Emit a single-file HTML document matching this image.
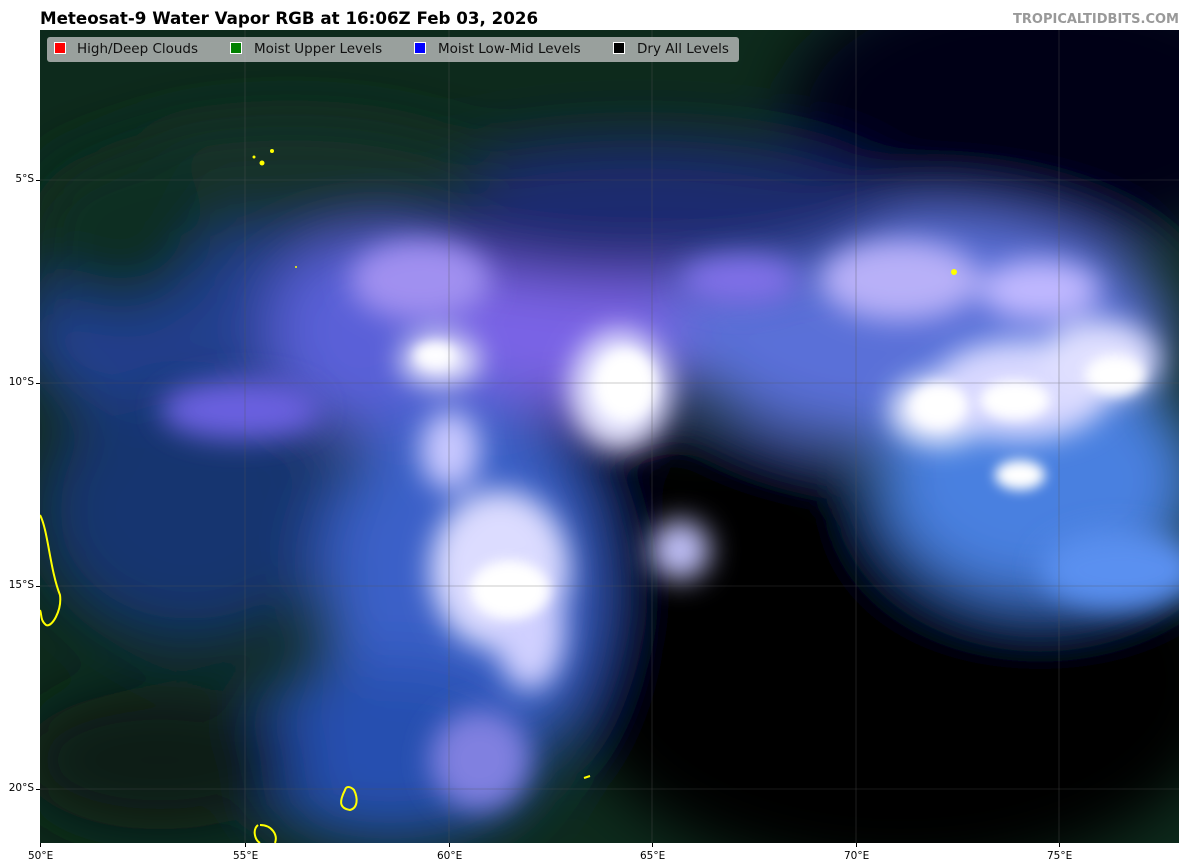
<!DOCTYPE html>
<html><head><meta charset="utf-8"><style>
body{margin:0;width:1200px;height:867px;background:#fff;position:relative;overflow:hidden;font-family:"DejaVu Sans","Liberation Sans",sans-serif}
.title{position:absolute;left:40px;top:8px;font-weight:bold;font-size:16.7px;color:#000}
.brand{position:absolute;right:21px;top:12px;font-weight:bold;font-size:13px;color:#999}
#map{position:absolute;left:40px;top:30px;width:1139px;height:813px;overflow:hidden;background:#0c2418}
.leg{position:absolute;left:47px;top:37px;width:692px;height:25px;background:rgba(200,200,200,0.75);border-radius:3px;font-size:13.5px;color:#111}
.leg span{position:absolute;top:4px}
.leg i{position:absolute;top:5px;width:12px;height:12px;border:1px solid #fff;box-sizing:border-box}
.yl{position:absolute;font-size:10.5px;color:#000;right:1166px}
.xl{position:absolute;font-size:10.5px;color:#000;top:850px}
.tk{position:absolute;background:#000}
</style></head><body>
<div class="title">Meteosat-9 Water Vapor RGB at 16:06Z Feb 03, 2026</div>
<div class="brand">TROPICALTIDBITS.COM</div>
<div id="map">
<svg width="1139" height="813" viewBox="0 0 1139 813">
<defs>
<filter id="b1"><feGaussianBlur stdDeviation="30"/></filter>
<filter id="b2"><feGaussianBlur stdDeviation="14"/></filter>
<filter id="b3"><feGaussianBlur stdDeviation="6"/></filter>
</defs>
<rect width="1139" height="813" fill="#0d2a1c"/>
<g filter="url(#b1)">
<ellipse cx="1000" cy="80" rx="250" ry="140" fill="#020018"/>
<ellipse cx="860" cy="650" rx="330" ry="200" fill="#000"/>
<ellipse cx="680" cy="520" rx="160" ry="120" fill="#000"/>
<ellipse cx="560" cy="430" rx="70" ry="60" fill="#050010"/>
<ellipse cx="200" cy="300" rx="220" ry="110" fill="#24408f"/>
<ellipse cx="150" cy="480" rx="150" ry="130" fill="#193470"/>
<ellipse cx="380" cy="300" rx="150" ry="120" fill="#5a60d8"/>
<ellipse cx="540" cy="280" rx="140" ry="100" fill="#7a64e6"/>
<ellipse cx="880" cy="300" rx="250" ry="120" fill="#5a70d8"/>
<ellipse cx="1000" cy="450" rx="160" ry="120" fill="#4a80e0"/>
<ellipse cx="420" cy="560" rx="140" ry="200" fill="#3a60c8"/>
<ellipse cx="350" cy="720" rx="150" ry="90" fill="#2850b0"/>
<ellipse cx="120" cy="730" rx="140" ry="70" fill="#081a14"/>
<ellipse cx="600" cy="180" rx="250" ry="70" fill="#1a2a70"/>
<ellipse cx="250" cy="150" rx="200" ry="60" fill="#13302a"/>
<ellipse cx="80" cy="200" rx="90" ry="80" fill="#0f2e22"/>
</g>
<g filter="url(#b2)">
<ellipse cx="380" cy="250" rx="70" ry="40" fill="#a090f0"/>
<ellipse cx="580" cy="360" rx="50" ry="60" fill="#e8e8ff"/>
<ellipse cx="460" cy="540" rx="70" ry="80" fill="#dcdcff"/>
<ellipse cx="490" cy="600" rx="35" ry="60" fill="#d0d0ff"/>
<ellipse cx="400" cy="330" rx="40" ry="25" fill="#f0f0ff"/>
<ellipse cx="410" cy="420" rx="30" ry="40" fill="#c8c8ff"/>
<ellipse cx="900" cy="380" rx="50" ry="35" fill="#f4f4ff"/>
<ellipse cx="980" cy="360" rx="90" ry="50" fill="#d8d8ff"/>
<ellipse cx="1060" cy="330" rx="60" ry="40" fill="#e0e0ff"/>
<ellipse cx="860" cy="250" rx="80" ry="40" fill="#b8b0f8"/>
<ellipse cx="1000" cy="260" rx="60" ry="30" fill="#c0b8ff"/>
<ellipse cx="1080" cy="540" rx="80" ry="40" fill="#5a90f0"/>
<ellipse cx="640" cy="520" rx="30" ry="30" fill="#c0c0f8"/>
<ellipse cx="440" cy="730" rx="50" ry="50" fill="#8080e0"/>
<ellipse cx="200" cy="380" rx="80" ry="30" fill="#6a60e0"/>
<ellipse cx="700" cy="250" rx="60" ry="25" fill="#8070e8"/>
</g>
<g filter="url(#b3)" fill="#fff">
<ellipse cx="585" cy="355" rx="30" ry="35"/>
<ellipse cx="395" cy="325" rx="20" ry="12"/>
<ellipse cx="900" cy="375" rx="28" ry="22"/>
<ellipse cx="975" cy="370" rx="35" ry="20"/>
<ellipse cx="1075" cy="345" rx="30" ry="20"/>
<ellipse cx="470" cy="560" rx="40" ry="30"/>
<ellipse cx="980" cy="445" rx="25" ry="15"/>
</g>
<g stroke="#555" stroke-width="0.6" opacity="0.6">
<line x1="0" y1="150" x2="1139" y2="150"/><line x1="0" y1="353" x2="1139" y2="353"/>
<line x1="0" y1="556" x2="1139" y2="556"/><line x1="0" y1="759" x2="1139" y2="759"/>
<line x1="205" y1="0" x2="205" y2="813"/><line x1="409" y1="0" x2="409" y2="813"/>
<line x1="612" y1="0" x2="612" y2="813"/><line x1="816" y1="0" x2="816" y2="813"/>
<line x1="1019" y1="0" x2="1019" y2="813"/>
</g>
<g stroke="#ff0" stroke-width="2" fill="none">
<path d="M0 485 C8 500 10 540 20 565 C22 580 12 598 6 595 C0 590 2 585 0 580"/>
<path d="M305 760 C300 770 298 778 310 780 C318 778 318 768 314 760 C310 756 306 756 305 760Z"/>
<path d="M218 795 C212 800 215 810 220 813 M235 813 C238 805 232 795 220 795"/>
<path d="M544 748 L550 746"/>
</g>
<g fill="#ff0"><circle cx="222" cy="133" r="2.5"/><circle cx="232" cy="121" r="2"/><circle cx="214" cy="127" r="1.5"/><circle cx="914" cy="242" r="3"/><circle cx="256" cy="237" r="1"/></g>
</svg>
</div>
<div class="leg">
<i style="left:7px;background:#f00"></i><span style="left:30px">High/Deep Clouds</span>
<i style="left:183px;background:#008000"></i><span style="left:207px">Moist Upper Levels</span>
<i style="left:367px;background:#00f"></i><span style="left:391px">Moist Low-Mid Levels</span>
<i style="left:566px;background:#000"></i><span style="left:590px">Dry All Levels</span>
</div>
<div class="yl" style="top:173px">5°S</div><div class="tk" style="left:36px;top:180px;width:4px;height:1px"></div>
<div class="yl" style="top:376px">10°S</div><div class="tk" style="left:36px;top:383px;width:4px;height:1px"></div>
<div class="yl" style="top:579px">15°S</div><div class="tk" style="left:36px;top:586px;width:4px;height:1px"></div>
<div class="yl" style="top:782px">20°S</div><div class="tk" style="left:36px;top:789px;width:4px;height:1px"></div>
<div class="xl" style="left:28px">50°E</div><div class="tk" style="left:40px;top:843px;width:1px;height:4px"></div>
<div class="xl" style="left:233px">55°E</div><div class="tk" style="left:245px;top:843px;width:1px;height:4px"></div>
<div class="xl" style="left:437px">60°E</div><div class="tk" style="left:449px;top:843px;width:1px;height:4px"></div>
<div class="xl" style="left:640px">65°E</div><div class="tk" style="left:652px;top:843px;width:1px;height:4px"></div>
<div class="xl" style="left:844px">70°E</div><div class="tk" style="left:856px;top:843px;width:1px;height:4px"></div>
<div class="xl" style="left:1047px">75°E</div><div class="tk" style="left:1059px;top:843px;width:1px;height:4px"></div>
</body></html>
